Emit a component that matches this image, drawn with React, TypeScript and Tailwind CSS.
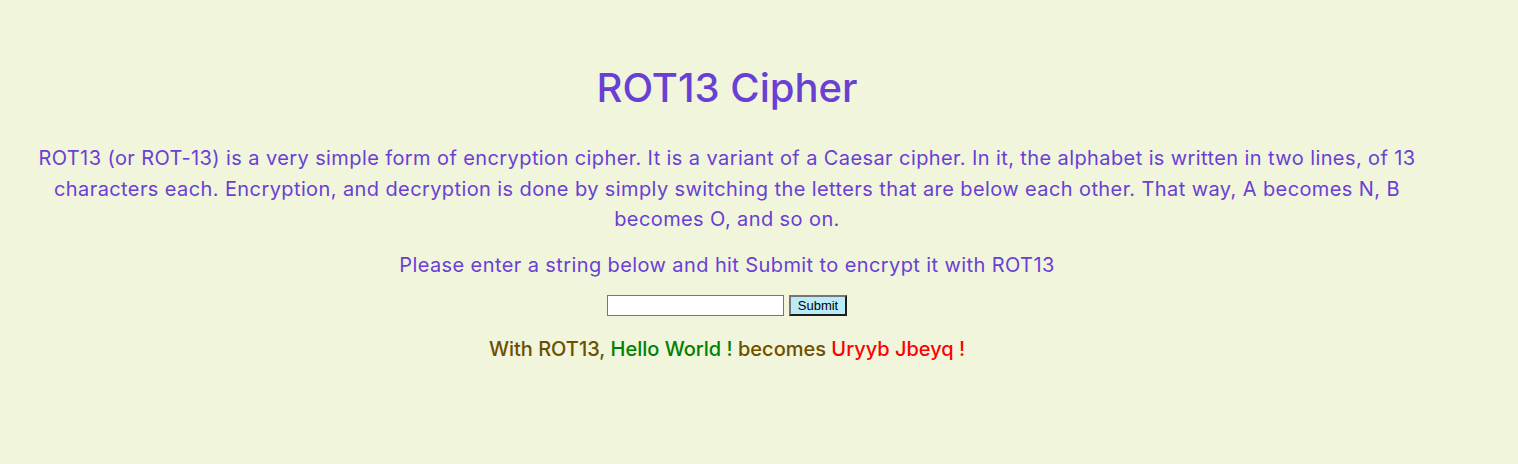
export default function App() {
  return (
    <main
      className="min-h-[464px] bg-[#f0f5dc] pl-[8px] pr-[72px] pt-[58px] text-center text-[#6a3fd4]"
      style={{ fontFamily: "Inter, 'Open Sans', sans-serif" }}
    >
      <h1 className="text-[40px] font-medium leading-[60px]">ROT13 Cipher</h1>
      <p className="mt-[25px] text-[20px] leading-[30.5px] tracking-[0.4px]">
        ROT13 (or ROT-13) is a very simple form of encryption cipher. It is a variant of a Caesar cipher. In it, the
        alphabet is written in two lines, of 13 characters each. Encryption, and decryption is done by simply switching
        the letters that are below each other. That way, A becomes N, B becomes O, and so on.
      </p>
      <p className="mt-[15px] text-[20px] leading-[30px] tracking-[0.4px]">
        Please enter a string below and hit Submit to encrypt it with ROT13
      </p>
      <form className="mt-[15px] flex items-center justify-center gap-[5px]" onSubmit={(e) => e.preventDefault()}>
        <input
          type="text"
          className="h-[21px] w-[177px] border border-[#767676] bg-white px-1 text-[13px]"
        />
        <button
          type="submit"
          className="h-[21px] border-2 border-t-[#767676] border-l-[#767676] border-r-[#1e1e1e] border-b-[#1e1e1e] bg-[#b9ecf6] px-[7px] text-[13px] leading-none text-black"
          style={{ fontFamily: "'Liberation Sans', Arial, sans-serif" }}
        >
          Submit
        </button>
      </form>
      <p className="mt-[18px] text-[20px] font-medium leading-[30px] text-[#6b5000]">
        With ROT13, <span className="text-[#008000]">Hello World !</span> becomes{" "}
        <span className="text-[#ff0000]">Uryyb Jbeyq !</span>
      </p>
    </main>
  );
}
